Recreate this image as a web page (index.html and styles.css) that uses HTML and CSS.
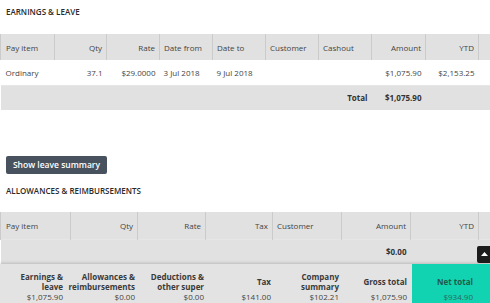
FILE: index.html
```html
<!DOCTYPE html>
<html lang="en">
<head>
<meta charset="utf-8">
<title>Pay run</title>
<link rel="stylesheet" href="styles.css">
</head>
<body>
<div class="page">
  <h2 class="section-title">EARNINGS &amp; LEAVE</h2>
  <table class="grid earnings">
    <colgroup>
      <col class="c54"><col class="c52"><col class="c53"><col class="c53"><col class="c53"><col class="c53"><col class="c53"><col class="c54"><col class="c53"><col class="c40">
    </colgroup>
    <thead>
      <tr>
        <th>Pay item</th><th class="num">Qty</th><th class="num">Rate</th><th>Date from</th><th>Date to</th><th>Customer</th><th>Cashout</th><th class="num">Amount</th><th class="num">YTD</th><th></th>
      </tr>
    </thead>
    <tbody>
      <tr class="row">
        <td>Ordinary</td><td class="num">37.1</td><td class="num">$29.0000</td><td>3 Jul 2018</td><td>9 Jul 2018</td><td></td><td></td><td class="num">$1,075.90</td><td class="num">$2,153.25</td><td></td>
      </tr>
      <tr class="total">
        <td></td><td></td><td></td><td></td><td></td><td></td><td class="num strong">Total</td><td class="num strong">$1,075.90</td><td></td><td></td>
      </tr>
    </tbody>
  </table>

  <div class="actions">
    <button class="btn" type="button">Show leave summary</button>
  </div>

  <h2 class="section-title second">ALLOWANCES &amp; REIMBURSEMENTS</h2>
  <table class="grid allowances">
    <colgroup>
      <col class="c70"><col class="c67"><col class="c68"><col class="c67"><col class="c69"><col class="c69"><col class="c68"><col class="c40">
    </colgroup>
    <thead>
      <tr>
        <th>Pay item</th><th class="num">Qty</th><th class="num">Rate</th><th class="num">Tax</th><th>Customer</th><th class="num">Amount</th><th class="num">YTD</th><th></th>
      </tr>
    </thead>
    <tbody>
      <tr class="total">
        <td></td><td></td><td></td><td></td><td></td><td class="num strong">$0.00</td><td></td><td></td>
      </tr>
    </tbody>
  </table>
</div>

<button class="scroll-top" type="button" aria-label="Scroll to top">
  <svg width="7" height="4" viewBox="0 0 7 4"><polygon points="0,4 3.5,0 7,4" fill="#fff"/></svg>
</button>

<div class="summary">
  <div class="sum-cell">
    <div class="sum-label">Earnings &amp;<br>leave</div>
    <div class="sum-value">$1,075.90</div>
  </div>
  <div class="sum-cell">
    <div class="sum-label">Allowances &amp;<br>reimbursements</div>
    <div class="sum-value">$0.00</div>
  </div>
  <div class="sum-cell">
    <div class="sum-label">Deductions &amp;<br>other super</div>
    <div class="sum-value">$0.00</div>
  </div>
  <div class="sum-cell">
    <div class="sum-label">Tax</div>
    <div class="sum-value">$141.00</div>
  </div>
  <div class="sum-cell">
    <div class="sum-label">Company<br>summary</div>
    <div class="sum-value">$102.21</div>
  </div>
  <div class="sum-cell">
    <div class="sum-label">Gross total</div>
    <div class="sum-value">$1,075.90</div>
  </div>
  <div class="sum-cell net">
    <div class="sum-label">Net total</div>
    <div class="sum-value">$934.90</div>
  </div>
</div>
</body>
</html>
```

FILE: styles.css
```css
* { box-sizing: border-box; }

html, body {
  margin: 0;
  padding: 0;
  background: #fff;
  overflow: hidden;
}

body {
  font-family: "Open Sans", "Liberation Sans", sans-serif;
  font-size: 8px;
  color: #444;
  width: 490px;
  height: 303px;
  position: relative;
}

.page {
  overflow: hidden;
  width: 490px;
}

.section-title {
  margin: 6px 0 16px 6px;
  font-size: 8px;
  line-height: 12px;
  font-weight: 600;
  color: #2a2a2a;
  letter-spacing: 0;
}

.section-title.second {
  margin: 11px 0 15px 6px;
}

.grid {
  border-collapse: collapse;
  table-layout: fixed;
}

.earnings { width: 518px; }
.allowances { width: 518px; }

.c40 { width: 40px; }
.c52 { width: 52px; }
.c53 { width: 53px; }
.c54 { width: 54px; }
.c67 { width: 67px; }
.c68 { width: 68px; }
.c69 { width: 69px; }
.c70 { width: 70px; }

.grid th,
.grid td {
  padding: 0 4px;
  text-align: left;
  white-space: nowrap;
  overflow: hidden;
  line-height: 11px;
}

.grid th {
  height: 26px;
  background: #e1e1e1;
  font-weight: 400;
  color: #444;
  border-left: 1px solid #cbcbcb;
}

.allowances th { height: 27px; }

.grid th:first-child,
.grid td:first-child {
  padding-left: 5px;
}

.grid .num { text-align: right; }

.grid .row td {
  height: 25px;
  background: #fff;
  color: #444;
}

.grid .total td {
  height: 25px;
  background: #e1e1e1;
  border-top: 1px solid #e6e6e6;
}

.grid .strong {
  font-weight: 700;
  color: #333;
}

.actions {
  margin-top: 46px;
  padding-left: 6px;
}

.btn {
  display: block;
  width: 101px;
  height: 18px;
  padding: 0;
  border: none;
  border-radius: 2px;
  background: #47525e;
  color: #fff;
  font-family: "Open Sans", "Liberation Sans", sans-serif;
  font-size: 8.5px;
  font-weight: 600;
  line-height: 18px;
  text-align: center;
}

.scroll-top {
  position: absolute;
  left: 477px;
  top: 246px;
  width: 17px;
  height: 17px;
  padding: 0;
  border: none;
  border-radius: 2px;
  background: #1c1c1c;
  display: flex;
  align-items: center;
  justify-content: center;
}

.scroll-top svg { margin-right: 2px; margin-top: -2px; }

.summary {
  position: absolute;
  left: 0;
  top: 264px;
  width: 490px;
  height: 39px;
  display: grid;
  grid-template-columns: 67px 72px 69px 67px 68px 68px 79px;
  background: #e3e3e3;
  box-shadow: 0 -1px 3px rgba(0, 0, 0, 0.18);
}

.sum-cell {
  padding: 8px 4px 0 0;
  text-align: right;
  display: flex;
  flex-direction: column;
}

.sum-label {
  height: 20px;
  display: flex;
  align-items: center;
  justify-content: flex-end;
  text-align: right;
  font-weight: 700;
  color: #3a3a3a;
  line-height: 10px;
  white-space: nowrap;
}

.sum-value {
  line-height: 10px;
  color: #444;
  white-space: nowrap;
}

.net {
  margin-left: 1px;
  background: #12d3b1;
  padding-right: 17px;
}

.net .sum-label { color: #1e5a4b; }
.net .sum-value { color: #2a6b5b; }
```
